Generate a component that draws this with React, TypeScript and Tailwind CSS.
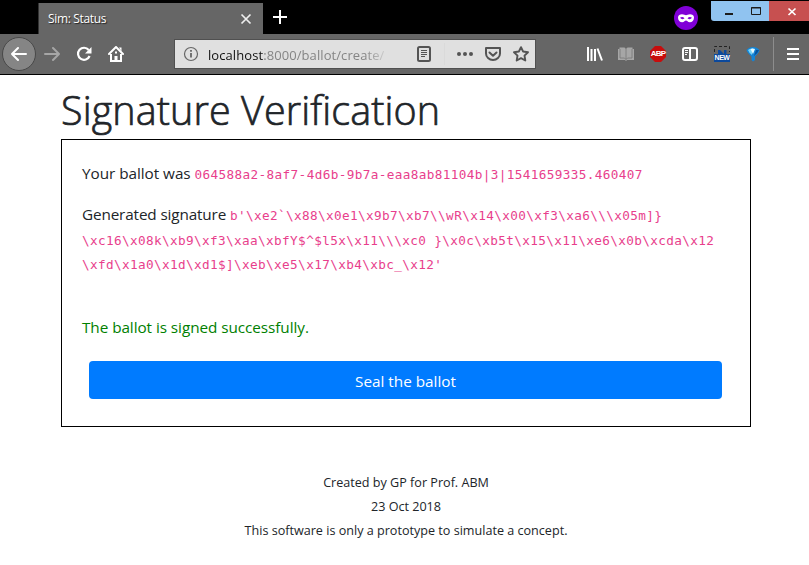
import React from "react";

const sans = "font-['Open_Sans','Noto_Sans',sans-serif]";
const mono = "font-['DejaVu_Sans_Mono',monospace] text-[12.7px] leading-none tracking-[0.366px] text-[#e83e8c]";

function TabBar() {
  return (
    <div className="flex h-[34px] items-start bg-black">
      <div className="ml-[38px] mt-[3px] flex h-[31px] w-[225px] items-center border-l border-[#333] bg-[#666] pl-[9px] pr-[11px] text-white">
        <span className="flex-1 whitespace-nowrap text-[12px] leading-[16px] tracking-[-0.35px] [text-shadow:1px_1px_1px_#222]">Sim: Status</span>
        <svg width="12" height="12" viewBox="0 0 12 12" fill="none" stroke="#eee" strokeWidth="1.7"><path d="M1.5 1.5l9 9M10.500 1.5l-9 9" /></svg>
      </div>
      <svg className="ml-[10px] mt-[10px]" width="14" height="14" viewBox="0 0 14 14" stroke="#fff" strokeWidth="2"><path d="M7 0v14M0 7h14" /></svg>
      <div className="flex-1" />
      <svg className="mr-[13px] mt-[6px]" width="24" height="24" viewBox="0 0 24 24">
        <circle cx="12" cy="12" r="12" fill="#8000d7" />
        <path d="M4 11.500C4 9 6 8.200 8 8.200c2 0 3 1 4 1s2-1 4-1c2 0 4 .8 4 3.300 0 3-1.800 4.700-4.200 4.700-2 0-2.800-1.700-3.800-1.700s-1.800 1.700-3.800 1.700C5.800 16.200 4 14.500 4 11.500z" fill="#fff" />
        <path d="M6 11.800q2.500-2 4.500.5-2.500 2-4.500-.5zM18 11.800q-2.500-2-4.500.5 2.500 2 4.500-.5z" fill="#8000d7" />
      </svg>
      <div className="mt-px flex h-5 w-[98px]">
        <div className="flex w-[58px] rounded-bl-[3px] bg-[#90c3f0]">
          <svg width="58" height="20" viewBox="0 0 58 20" fill="none" stroke="#1c1c1c"><path d="M14 13h8" strokeWidth="2" /><path d="M40.500 6.500h9v7h-9zM40 7h10" /></svg>
        </div>
        <div className="flex w-10 bg-[#c75050]">
          <svg width="40" height="20" viewBox="0 0 40 20" fill="none" stroke="#fff" strokeWidth="1.700"><path d="M19.500 7.500l7 6.500M26.500 7.500l-7 6.500" /></svg>
        </div>
      </div>
    </div>
  );
}

function UrlBar() {
  return (
    <div className="ml-[50px] flex h-[30px] w-[362px] items-center border border-[#505050] bg-[#e0e0e0] pl-[8px] text-[#545454]">
      <svg className="shrink-0" width="16" height="16" viewBox="0 0 16 16" fill="none" stroke="#666"><circle cx="8" cy="8" r="6.500" strokeWidth="1.200" /><path d="M8 7v4.500M8 4v1.700" strokeWidth="1.800" /></svg>
      <div className="ml-[9px] mt-[2px] w-[182px] whitespace-nowrap text-[13px] leading-[20px] text-[#858585] [mask-image:linear-gradient(to_right,#000_86%,transparent_100%)]">
        <span className="tracking-[0.08px]"><span className="text-[#111]">localhost</span>:8000/ballot/create/</span>
      </div>
      <svg className="ml-[27px] shrink-0" width="14" height="16" viewBox="0 0 14 16" fill="none" stroke="#545454"><rect x="1" y="1" width="12" height="14" rx="1.500" strokeWidth="2" /><path d="M4 4.500h6M4 6.500h6M4 8.500h6M4 10.500h4" /></svg>
      <div className="ml-[13px] h-[22px] w-px bg-[#dadada]" />
      <svg className="ml-[12px] shrink-0" width="16" height="16" viewBox="0 0 16 16" fill="#545454"><circle cx="2" cy="8" r="2" /><circle cx="8" cy="8" r="2" /><circle cx="14" cy="8" r="2" /></svg>
      <svg className="ml-[12px] shrink-0" width="16" height="16" viewBox="0 0 16 16" fill="none" stroke="#545454" strokeWidth="2" strokeLinecap="round" strokeLinejoin="round"><path d="M1 2h14v5.500a7 6.500 0 0 1-14 0z" /><path d="M4.500 6.500L8 9.800l3.500-3.300" /></svg>
      <svg className="ml-[12px] shrink-0" width="16" height="16" viewBox="0 0 16 16" fill="none" stroke="#545454" strokeWidth="1.900" strokeLinejoin="round"><path d="M8 1.200l2.100 4.300 4.900.7-3.500 3.400.8 4.900L8 12.200l-4.300 2.300.8-4.900L1 6.200l4.900-.7z" /></svg>
    </div>
  );
}

function Toolbar() {
  return (
    <div className="flex h-[41px] items-center border-b border-black bg-[#666]">
      <div className="ml-[2px] flex size-[34px] shrink-0 items-center justify-center rounded-full border border-[#484848] bg-[#858585]">
        <svg width="16" height="16" viewBox="0 0 16 16" fill="none" stroke="#fff" strokeWidth="2" strokeLinecap="round" strokeLinejoin="round"><path d="M15 8H1M7 2L1 8l6 6" /></svg>
      </div>
      <svg className="ml-[8px] shrink-0" width="16" height="16" viewBox="0 0 16 16" fill="none" stroke="#a6a6a6" strokeWidth="2" strokeLinecap="round" strokeLinejoin="round"><path d="M1 8h14M9 2l6 6-6 6" /></svg>
      <svg className="ml-[16px] shrink-0" width="16" height="16" viewBox="0 0 16 16"><path d="M13.600 10A6 6 0 1 1 12.700 4" fill="none" stroke="#fff" strokeWidth="2.200" /><path d="M15.500 1v6.500H9z" fill="#fff" /></svg>
      <svg className="ml-[16px] shrink-0" width="16" height="16" viewBox="0 0 16 16"><path d="M1 8l7-7 7 7" fill="none" stroke="#fff" strokeWidth="2" strokeLinecap="round" strokeLinejoin="round" /><path d="M3 8v7h10V8" fill="none" stroke="#fff" strokeWidth="2" /><path d="M6.500 15v-5h3v5zM7 5.500h2v2H7zM11 1.500h2.500v4z" fill="#fff" /></svg>
      <UrlBar />
      <svg className="ml-[50px] shrink-0" width="17" height="16" viewBox="0 0 17 16" stroke="#fff" strokeWidth="2"><path d="M2 1v14M5.500 3v12M9 3v12M11.500 2.500L16 14.500" /></svg>
      <svg className="ml-[14px] shrink-0" width="18" height="16" viewBox="0 0 18 16"><path d="M1 3h1.500V1.500H7.500L9 3l1.500-1.500h5V3H17v11h-7l-1 1-1-1H1z" fill="#a6a6a6" /><path d="M3 3v9h4.500L9 13.500V3M15 3v9h-4.500L9 13.500" fill="none" stroke="#777" strokeWidth=".8" /></svg>
      <div className="relative ml-[15px] size-4 shrink-0">
        <svg width="16" height="16" viewBox="0 0 16 16"><path d="M5 0h6l5 5v6l-5 5H5l-5-5V5z" fill="#c70d0d" /></svg>
        <span className="absolute inset-0 text-center font-['Liberation_Sans',sans-serif] text-[8px] font-bold leading-[16px] tracking-[-0.8px] text-white">ABP</span>
      </div>
      <svg className="ml-[16px] shrink-0" width="16" height="16" viewBox="0 0 16 16" fill="none" stroke="#fff"><rect x="1" y="2" width="14" height="12" rx="2" strokeWidth="2" /><path d="M8 2v12" strokeWidth="2" /><path d="M3 4.500h3M3 6.500h3M3 8.500h2" /></svg>
      <div className="relative ml-[16px] size-4 shrink-0">
        <svg width="16" height="16" viewBox="0 0 16 16"><path d="M.5 6V.5H15.500V6" fill="none" stroke="#222" strokeDasharray="3 2" /><path d="M0 16V8h4V4h2l4 4V4h2.500v4H16v8z" fill="#0c499c" /></svg>
        <span className="absolute left-0 top-[8px] w-4 text-center font-['Liberation_Sans',sans-serif] text-[7px] font-bold leading-[8px] tracking-[-0.5px] text-white">NEW</span>
      </div>
      <svg className="ml-[15px] shrink-0" width="16" height="16" viewBox="0 0 16 16"><path d="M1.500 4Q4 1 8 1t6.500 3c0 2-2 4-4.500 6.500V14l-2 1.500L6.500 14v-3.500C3.500 8 2 6 1.500 4z" fill="#1484d6" /><path d="M3 4Q5 2 8 2.500L7 9Q4 7 3 4z" fill="#77d4fa" /><path d="M5.500 3Q8 2 10 3L8 8z" fill="#e7faff" /><path d="M14 4q-1 3-5 6l2-6z" fill="#07529d" /></svg>
      <div className="ml-[12px] h-[34px] w-px bg-[#8d8d8d]" />
      <svg className="ml-[13px] shrink-0" width="12" height="12" viewBox="0 0 12 12" stroke="#fff" strokeWidth="2"><path d="M0 1h12M0 6h12M0 11h12" /></svg>
    </div>
  );
}

export default function App() {
  return (
    <div className={`h-[565px] w-[809px] overflow-hidden bg-white text-[#212529] ${sans}`}>
      <TabBar />
      <Toolbar />
      <main className="ml-[61px] w-[690px] pt-[11px]">
        <h1 className="h-[53px] whitespace-nowrap text-[39.500px] font-light leading-[48px] tracking-[0.1px] [-webkit-text-stroke:0.7px_#212529]">Signature Verification</h1>
        <section className="h-[288px] border border-black px-5 pt-[21px] text-[15.300px] leading-6">
          <p className="h-6 whitespace-nowrap"><span className="tracking-[-0.04px]">Your ballot was </span><code className={mono}>064588a2-8af7-4d6b-9b7a-eaa8ab81104b|3|1541659335.460407</code></p>
          <div className="mt-[17px] h-[74px] whitespace-nowrap leading-[24.500px]">
            <p><span className="tracking-[-0.14px]">Generated signature </span><code className={mono}>{"b'\\xe2`\\x88\\x0e1\\x9b7\\xb7\\\\wR\\x14\\x00\\xf3\\xa6\\\\\\x05m]}"}</code></p>
            <p><code className={mono}>{"\\xc16\\x08k\\xb9\\xf3\\xaa\\xbfY$^$l5x\\x11\\\\\\xc0 }\\x0c\\xb5t\\x15\\x11\\xe6\\x0b\\xcda\\x12"}</code></p>
            <p><code className={mono}>{"\\xfd\\x1a0\\x1d\\xd1$]\\xeb\\xe5\\x17\\xb4\\xbc_\\x12'"}</code></p>
          </div>
          <p className="mt-[39px] h-6 whitespace-nowrap tracking-[-0.06px] text-[#008000]">The ballot is signed successfully.</p>
          <button className="ml-[7px] mt-[22px] block h-[38px] w-[633px] rounded-[4px] bg-[#007bff] pt-[2px] text-white">Seal the ballot</button>
        </section>
        <footer className="mt-[44px] text-center text-[12.600px] leading-6">
          <p>Created by GP for Prof. ABM</p>
          <p>23 Oct 2018</p>
          <p>This software is only a prototype to simulate a concept.</p>
        </footer>
      </main>
    </div>
  );
}
